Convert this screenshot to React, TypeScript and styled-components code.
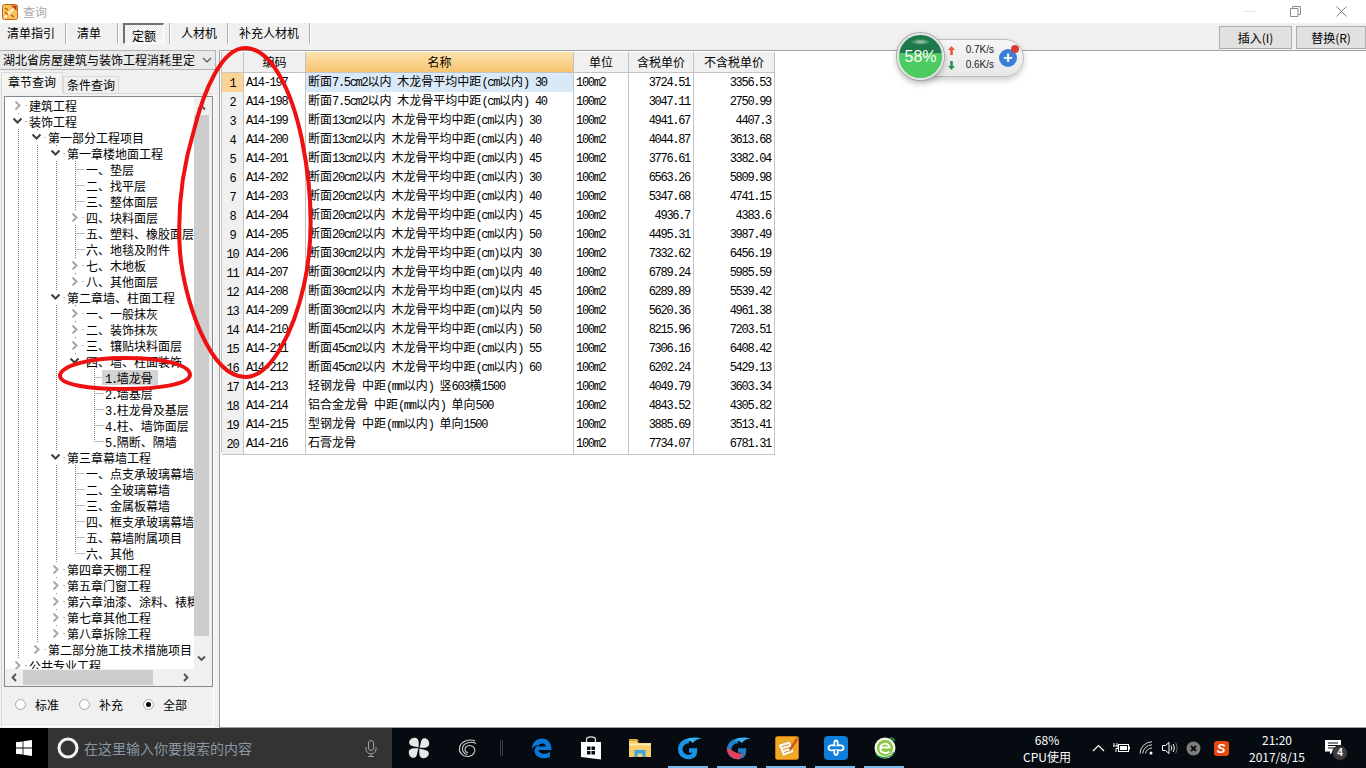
import React from "react";
import styled, { createGlobalStyle } from "styled-components";

const Global = createGlobalStyle`
  html, body { margin: 0; padding: 0; background: #fff; overflow: hidden; }
  * { box-sizing: border-box; }
  body { font-family: "Noto Sans CJK SC", "Liberation Sans", sans-serif; font-size: 12px; color: #000; }
`;

const Root = styled.div`position: relative; width: 1366px; height: 768px; display: flex; flex-direction: column; overflow: hidden;`;

/* ---------- title bar ---------- */
const TitleBar = styled.div`height: 23px; flex: none; background: #fff; display: flex; align-items: center; padding-left: 2px;`;
const TitleText = styled.span`margin-left: 5px; color: #a8a8a8; font-size: 12px; line-height: 16px;`;
const WindowControls = styled.div`margin-left: auto; display: flex; align-items: center; height: 23px; padding-right: 2px;`;
const WindowBtn = styled.div`width: 46px; height: 23px; display: flex; align-items: center; justify-content: center;`;

/* ---------- toolbar ---------- */
const Toolbar = styled.div`height: 27px; flex: none; background: #f0f0f0; display: flex; align-items: flex-start;`;
const ToolItem = styled.div<{ $w: number; $pl: number }>`
  width: ${p => p.$w}px; height: 21px; padding-left: ${p => p.$pl}px; line-height: 20px; white-space: nowrap;
  border-right: 1px solid #b0b0b0; box-shadow: 1px 0 0 #fff;
`;
const ActiveHolder = styled.div`width: 52px; height: 21px; padding-left: 5px; border-right: 1px solid #b0b0b0; box-shadow: 1px 0 0 #fff;`;
const ActiveTool = styled.div`
  width: 41px; height: 21px; text-align: center; line-height: 21px;
  border: 1px solid #fff; border-top: 2px solid #707070; border-left: 2px solid #707070;
  background-color: #fff;
  background-image: repeating-conic-gradient(#e4e4e4 0 25%, #fff 0 50%);
  background-size: 2px 2px;
`;
const ToolRight = styled.div`margin-left: auto; display: flex; gap: 4px; padding-top: 3px;`;
const ActionBtn = styled.button<{ $w: number }>`
  width: ${p => p.$w}px; height: 23px; background: #e1e1e1; border: 1px solid #adadad; padding: 0;
  font-family: "Noto Sans CJK SC", "Liberation Sans", sans-serif; font-size: 12px; color: #000; line-height: 20px;
`;

/* ---------- body ---------- */
const Body = styled.div`height: 678px; flex: none; display: flex; background: #f0f0f0;`;
const LeftPanel = styled.div`width: 219px; flex: none; display: flex; flex-direction: column; background: #f0f0f0;`;
const Combo = styled.div`
  width: 216px; height: 20px; flex: none; background: #e9e9e9; border: 1px solid #b4b4b4; border-left: none;
  display: flex; align-items: center; justify-content: space-between; padding: 0 3px; line-height: 18px; white-space: nowrap;
`;
const Tabs = styled.div`height: 21px; flex: none; margin-top: 2px; padding-left: 1px; display: flex; align-items: flex-end; position: relative; z-index: 1;`;
const Tab = styled.div<{ $active?: boolean }>`
  width: ${p => (p.$active ? 62 : 56)}px; height: ${p => (p.$active ? 22 : 17)}px; text-align: center;
  line-height: ${p => (p.$active ? 17 : 15)}px;
  background: ${p => (p.$active ? "#f3f3f3" : "#f0f0f0")};
  border: 1px solid #d9d9d9; border-bottom: none;
  margin-bottom: ${p => (p.$active ? -1 : 0)}px;
`;
const TabPanel = styled.div`
  width: 213px; margin: 0 0 1px 1px; flex: 1; border: 1px solid #d9d9d9; border-bottom: 1px solid #fff; border-right-color: #fff;
  padding: 2px 0 0 2px; display: flex; flex-direction: column; background: #f0f0f0;
`;
const TreeBox = styled.div`
  width: 209px; height: 591px; flex: none; border: 1px solid #828790; display: grid;
  grid-template-columns: 189px 17px; grid-template-rows: 572px 16px; background: #f0f0f0;
`;
const TreeBody = styled.div`position: relative; background: #fff; overflow: hidden;`;
const TreeLines = styled.svg`position: absolute; left: 0; top: 0;`;
const TreeRow = styled.div<{ $level: number }>`
  position: relative; height: 16px; display: flex; align-items: center; white-space: nowrap;
  padding-left: ${p => 3 + 19 * p.$level}px;
`;
const ChevronSlot = styled.div`width: 21px; flex: none; padding-left: 3px; display: flex; align-items: center;`;
const ChevronBack = styled.div`width: 13px; height: 15px; background: #fff; display: flex; align-items: center; justify-content: center;`;
const TreeLabel = styled.span<{ $selected?: boolean }>`
  margin-left: -3px; padding: 0 ${p => (p.$selected ? 5 : 2)}px 0 3px; height: 15px; line-height: 15px;
  background: ${p => (p.$selected ? "#d3d3d3" : "transparent")};
`;
const VScroll = styled.div`grid-row: 1; grid-column: 2; display: flex; flex-direction: column; align-items: flex-start; background: #f0f0f0;`;
const ArrowCell = styled.div<{ $up?: boolean }>`
  height: 18px; width: 15px; flex: none; display: flex; align-items: center; justify-content: center;
  padding: ${p => (p.$up ? "3px 0 0" : "0 0 3px")};
`;
const VTrack = styled.div`flex: 1; width: 15px;`;
const VThumb = styled.div`width: 15px; height: 521px; background: #cdcdcd;`;
const HScroll = styled.div`grid-column: 1 / span 2; grid-row: 2; display: flex; align-items: center; background: #f0f0f0;`;
const HThumb = styled.div`width: 130px; height: 15px; background: #cdcdcd;`;
const HGap = styled.div`flex: 1;`;
const HEnd = styled.div`width: 17px; flex: none;`;
const HArrow = styled.div`width: 18px; height: 15px; display: flex; align-items: center; justify-content: center;`;
const RadioRow = styled.div`flex: 1; display: flex; align-items: center; padding: 0 0 5px 11px;`;
const RadioItem = styled.div`width: 64px; display: flex; align-items: center; gap: 9px;`;
const RadioDot = styled.div<{ $on?: boolean }>`
  width: 11px; height: 11px; border-radius: 50%; border: 1px solid #a8a8a8; background: #fff; position: relative;
  display: flex; align-items: center; justify-content: center;
  &::after { content: ""; width: 5px; height: 5px; border-radius: 50%; background: ${p => (p.$on ? "#000" : "transparent")}; }
`;

/* ---------- table ---------- */
const MainPanel = styled.div`flex: 1; background: #fff; border-top: 1px solid #a0a0a0; border-left: 1px solid #a0a0a0; border-bottom: 1px solid #a0a0a0; padding: 1px;`;
const Grid = styled.div`width: 554px; border-left: 1px solid #c4c4c4;`;
const GridRow = styled.div<{ $h: number }>`
  display: grid; grid-template-columns: 22px 62px 268px 55px 65px 81px; height: ${p => p.$h}px;
`;
const HeadCell = styled.div<{ $hot?: boolean }>`
  background: ${p => (p.$hot ? "linear-gradient(#fde3ae, #f7c46f)" : "#f0f0f0")};
  border-right: 1px solid #c4c4c4; border-bottom: 1px solid #c4c4c4; text-align: center; line-height: 20px;
`;
const NumCell = styled.div<{ $hot?: boolean }>`
  background: ${p => (p.$hot ? "#fcd395" : "#f0f0f0")};
  border-right: 1px solid #c4c4c4; border-bottom: 1px solid #c4c4c4; text-align: center; line-height: 17px;
`;
const Cell = styled.div<{ $right?: boolean; $hot?: boolean }>`
  background: ${p => (p.$hot ? "#d9e9f8" : "#fff")};
  border-right: 1px solid #c4c4c4; border-bottom: 1px solid #c4c4c4; line-height: 16px; white-space: nowrap;
  padding: 0 ${p => (p.$right ? 3 : 1)}px 0 ${p => (p.$right ? 0 : 2)}px; text-align: ${p => (p.$right ? "right" : "left")};
`;
const Lat = styled.span`font-family: "Liberation Mono", monospace; font-size: 12px; letter-spacing: -1.3px; white-space: pre;`;

/* ---------- taskbar ---------- */
const Taskbar = styled.div`height: 40px; flex: none; background: #050b11; display: flex; align-items: stretch; color: #fff;`;
const StartBtn = styled.div`width: 48px; background: #000; display: flex; align-items: center; justify-content: center;`;
const SearchBox = styled.div`width: 344px; background: #333; display: flex; align-items: center; padding-left: 9px;`;
const SearchText = styled.span`margin-left: 5px; color: #8a97a3; font-size: 14px; width: 281px; white-space: nowrap;`;
const TaskSlot = styled.div<{ $w?: number; $ml?: number; $on?: boolean }>`
  width: ${p => p.$w ?? 49}px; margin-left: ${p => p.$ml ?? 0}px; display: flex; align-items: center; justify-content: center; position: relative;
  ${p => p.$on && `&::after { content: ""; position: absolute; left: 4px; right: 5px; bottom: 0; height: 2px; background: #76b9ed; }`}
`;
const TaskSep = styled.div`width: 3px; height: 16px; border-left: 1px solid #3a4046; border-right: 1px solid #3a4046;`;
const Tray = styled.div`margin-left: auto; display: flex; align-items: stretch;`;
const TrayText = styled.div<{ $w: number }>`
  width: ${p => p.$w}px; display: flex; flex-direction: column; align-items: center; justify-content: center;
  font-family: "Noto Sans CJK SC", "Liberation Sans", sans-serif; font-size: 12px; line-height: 17px; color: #fff; white-space: nowrap;
`;
const Sogou = styled.div`
  width: 15px; height: 15px; border-radius: 3px; background: #e8480f; color: #fff; font: italic bold 13px/15px "Liberation Sans", sans-serif; text-align: center;
`;
const Badge = styled.div`
  position: absolute; left: 14px; top: 17px; width: 16px; height: 16px; border-radius: 50%; background: #3c3c3c; border: 1px solid #111;
  color: #fff; font: bold 10px/14px "Liberation Sans", sans-serif; text-align: center;
`;

/* ---------- overlays ---------- */
const Overlay = styled.svg`position: absolute; left: 0; top: 0; pointer-events: none;`;
const Widget = styled.div`position: absolute; left: 897px; top: 33px; width: 128px; height: 48px;`;
const WidgetPill = styled.div`
  position: absolute; left: 18px; top: 6px; width: 109px; height: 38px; border-radius: 19px;
  background: linear-gradient(#f6f6f6, #e8e8e8); border: 1px solid #bdbdbd; box-shadow: 0 3px 6px rgba(0,0,0,.2);
`;
const WidgetBall = styled.div`
  position: absolute; left: 0; top: 0; width: 47px; height: 47px; border-radius: 50%; border: 2px solid #e4e4e4;
  box-shadow: 0 0 0 1px #a9a9a9, 0 3px 6px rgba(0,0,0,.3);
  background: radial-gradient(ellipse 10px 3px at 50% 16%, rgba(255,255,255,.65), transparent), linear-gradient(#1d7a48 0 42%, #4ccb62 42%);
  color: #fff; font: 16px/43px "Liberation Sans", sans-serif; text-align: center;
`;
const Speed = styled.div<{ $top: number }>`
  position: absolute; left: 51px; top: ${p => p.$top}px; width: 46px; display: flex; justify-content: space-between; align-items: center;
  font: 10px/12px "Liberation Sans", sans-serif; color: #1a1a1a;
`;
const PlusBtn = styled.div`
  position: absolute; left: 102px; top: 16px; width: 18px; height: 18px; border-radius: 50%; background: #3b80d8; color: #fff;
  font: bold 16px/17px "Liberation Sans", sans-serif; text-align: center;
  &::after { content: ""; position: absolute; right: -2px; top: -4px; width: 8px; height: 8px; border-radius: 50%; background: #d93a3a; }
`;

/* ---------- data ---------- */
const Mixed = ({ text }: { text: string }) => (
  <>
    {text.split(/([\x00-\x7f]+)/).filter(Boolean).map((s, i) =>
      /^[\x00-\x7f]/.test(s) ? <Lat key={i}>{s}</Lat> : <span key={i}>{s}</span>
    )}
  </>
);

type Node = [number, string, "o" | "c" | "l", boolean?];
const tree: Node[] = [
  [0, "建筑工程", "c"], [0, "装饰工程", "o"], [1, "第一部分工程项目", "o"], [2, "第一章楼地面工程", "o"],
  [3, "一、垫层", "l"], [3, "二、找平层", "l"], [3, "三、整体面层", "l"], [3, "四、块料面层", "c"],
  [3, "五、塑料、橡胶面层", "l"], [3, "六、地毯及附件", "l"], [3, "七、木地板", "c"], [3, "八、其他面层", "c"],
  [2, "第二章墙、柱面工程", "o"], [3, "一、一般抹灰", "c"], [3, "二、装饰抹灰", "c"], [3, "三、镶贴块料面层", "c"],
  [3, "四、墙、柱面装饰", "o"], [4, "1.墙龙骨", "l", true], [4, "2.墙基层", "l"], [4, "3.柱龙骨及基层", "l"],
  [4, "4.柱、墙饰面层", "l"], [4, "5.隔断、隔墙", "l"], [2, "第三章幕墙工程", "o"], [3, "一、点支承玻璃幕墙", "l"],
  [3, "二、全玻璃幕墙", "l"], [3, "三、金属板幕墙", "l"], [3, "四、框支承玻璃幕墙", "l"], [3, "五、幕墙附属项目", "l"],
  [3, "六、其他", "l"], [2, "第四章天棚工程", "c"], [2, "第五章门窗工程", "c"], [2, "第六章油漆、涂料、裱糊工程", "c"],
  [2, "第七章其他工程", "c"], [2, "第八章拆除工程", "c"], [1, "第二部分施工技术措施项目", "c"], [0, "公共专业工程", "c"],
];
// [level, first row, last row] of each vertical dotted line
const vLines: [number, number, number][] = [
  [0, 1, 35], [1, 2, 34], [2, 3, 33], [3, 4, 11], [3, 13, 16], [3, 23, 28], [4, 17, 21],
];
const lineX = (l: number) => 13.5 + 19 * l;
const rowY = (i: number) => 8 + 16 * i;

const a = "木龙骨平均中距(cm以内) ";
const b = "木龙骨平均中距(cm)以内 ";
const rows: [string, string, string, string][] = [
  ["A14-197", `断面7.5cm2以内 ${a}30`, "3724.51", "3356.53"],
  ["A14-198", `断面7.5cm2以内 ${a}40`, "3047.11", "2750.99"],
  ["A14-199", `断面13cm2以内 ${a}30`, "4941.67", "4407.3"],
  ["A14-200", `断面13cm2以内 ${a}40`, "4044.87", "3613.68"],
  ["A14-201", `断面13cm2以内 ${a}45`, "3776.61", "3382.04"],
  ["A14-202", `断面20cm2以内 ${a}30`, "6563.26", "5809.98"],
  ["A14-203", `断面20cm2以内 ${a}40`, "5347.68", "4741.15"],
  ["A14-204", `断面20cm2以内 ${a}45`, "4936.7", "4383.6"],
  ["A14-205", `断面20cm2以内 ${a}50`, "4495.31", "3987.49"],
  ["A14-206", `断面30cm2以内 ${b}30`, "7332.62", "6456.19"],
  ["A14-207", `断面30cm2以内 ${b}40`, "6789.24", "5985.59"],
  ["A14-208", `断面30cm2以内 ${b}45`, "6289.89", "5539.42"],
  ["A14-209", `断面30cm2以内 ${b}50`, "5620.36", "4961.38"],
  ["A14-210", `断面45cm2以内 ${a}50`, "8215.96", "7203.51"],
  ["A14-211", `断面45cm2以内 ${a}55`, "7306.16", "6408.42"],
  ["A14-212", `断面45cm2以内 ${a}60`, "6202.24", "5429.13"],
  ["A14-213", "轻钢龙骨 中距(mm以内) 竖603横1500", "4049.79", "3603.34"],
  ["A14-214", "铝合金龙骨 中距(mm以内) 单向500", "4843.52", "4305.82"],
  ["A14-215", "型钢龙骨 中距(mm以内) 单向1500", "3885.69", "3513.41"],
  ["A14-216", "石膏龙骨", "7734.07", "6781.31"],
];

/* ---------- icons ---------- */
const Chevron = ({ open }: { open: boolean }) =>
  open ? (
    <svg width="11" height="8" viewBox="0 0 11 8"><path d="M1.500 1.500 5.500 5.500 9.500 1.500" fill="none" stroke="#404040" strokeWidth="2" /></svg>
  ) : (
    <svg width="8" height="11" viewBox="0 0 8 11"><path d="M1.500 1.500 5.500 5.500 1.500 9.500" fill="none" stroke="#a8a8a8" strokeWidth="2" /></svg>
  );
const Arrow = ({ d }: { d: string }) => (
  <svg width="9" height="9" viewBox="0 0 9 9"><path d={d} fill="none" stroke="#505050" strokeWidth="1.800" /></svg>
);
const AppLogo = () => (
  <svg width="16" height="16" viewBox="0 0 16 16">
    <rect x=".5" y=".5" width="15" height="15" rx="2" fill="#f8c25a" stroke="#c8641a" />
    <path d="M2.500 13.500 13.500 3" stroke="#fff3d0" strokeWidth="2" />
    <path d="M3 4l3 2M9 11l3 2M3 8l3 3" stroke="#b84a18" strokeWidth="1.100" />
    <path d="M9 1.500h5.500V7z" fill="#c8401a" />
  </svg>
);
const WinLogo = () => (
  <svg width="16" height="16" viewBox="0 0 16 16" fill="#fff">
    <path d="M0 2.300 6.600 1.400v6.200H0zM7.400 1.300 16 0v7.600H7.400zM0 8.400h6.600v6.200L0 13.700zM7.400 8.400H16V16l-8.600-1.300z" />
  </svg>
);
const Mic = () => (
  <svg width="12" height="17" viewBox="0 0 12 17" fill="none" stroke="#a0a0a0">
    <rect x="3.500" y=".5" width="5" height="10" rx="2.500" /><path d="M1 7v2a5 5 0 0 0 10 0V7M6 14v2M3 16.500h6" />
  </svg>
);
const Pinwheel = () => (
  <svg width="22" height="22" viewBox="0 0 22 22" fill="#e8e8e8">
    <path d="M10.500 10.500C7 9 3 9.500 1.500 7 .2 4 3 .8 6.500.8c3 0 5 2.200 4 9.700z" />
    <path d="M11.500 10.500C13 7 12.500 3 15 1.500c3-1.300 6.200 1.500 6.200 5 0 3-2.200 5-9.700 4z" />
    <path d="M11.500 11.500C15 13 19 12.500 20.500 15c1.300 3-1.500 6.200-5 6.200-3 0-5-2.200-4-9.700z" />
    <path d="M10.500 11.500C9 15 9.500 19 7 20.500c-3 1.300-6.200-1.500-6.200-5 0-3 2.200-5 9.700-4z" />
  </svg>
);
const Swirl = () => (
  <svg width="20" height="20" viewBox="0 0 20 20" fill="none" stroke="#cfcfcf" strokeWidth="1.100">
    <path d="M17 3C11 .5 2.500 3 1.500 10c-.7 5 4 9 9 8.500 4.500-.5 7.500-4.500 6-8-1.300-3-6-4-8.500-1.500-2 2-1 5.500 2 5.500" />
    <path d="M18 5.500C13 3 5.500 4.500 4.500 10c-.5 3 1.500 6 5 6.500" />
  </svg>
);
const Edge = () => (
  <svg width="21" height="21" viewBox="0 0 21 21">
    <path d="M1 11C1 4.500 6 .5 11 .5c6 0 9.500 4.500 9.500 11.500H7.500c.5 4 6.500 5 11.500 2v5c-6 2.500-15 1.500-15.500-6C3.500 10 6 7.500 8.500 6.500 5.500 6.800 2.500 8.500 1 11zm6.500-2.500h7.200c0-4-6.700-4-7.200 0z" fill="#0a78d4" fillRule="evenodd" />
  </svg>
);
const Store = () => (
  <svg width="22" height="24" viewBox="0 0 22 24">
    <path d="M6.500 6V3.500C6.500 1.500 8.500.8 11 .8s4.500.7 4.500 2.700V6" fill="none" stroke="#e4e4e4" strokeWidth="1.200" />
    <path d="M1 6h20v17.500L1 21z" fill="#fff" />
    <path d="M7 10.500h3.500v3.400H7zM11.500 10.500H15v3.400h-3.500zM7 15h3.500v3.400H7zM11.500 15H15v3.400h-3.500z" fill="#050b11" />
  </svg>
);
const Folder = () => (
  <svg width="22" height="18" viewBox="0 0 22 18">
    <path d="M0 2h8l2 2h12v14H0z" fill="#f3cd66" /><path d="M0 0h8l2 2H0z" fill="#dba93a" />
    <path d="M0 4.500h22v2H0z" fill="#ffe9a4" /><path d="M5.500 11h11v7h-3v-3.500h-5V18h-3z" fill="#35a6e8" />
  </svg>
);
const GIcon = ({ red }: { red?: boolean }) => (
  <svg width="26" height="24" viewBox="0 0 26 24" fill="none">
    <path d="M13 5C7.500 5 4 9 4.300 13.500 4.600 18.500 9 21.500 13.500 21c3.500-.4 5.500-3 5.500-6.500h-6" stroke={red ? "#1c7fc8" : "#1a92e6"} strokeWidth="4.500" />
    <path d="M9 4C13 .8 20.500 1 25.500 2.500c-3.500.5-6.500 1.500-8.500 4.500C15 5 12 4 9 4z" fill="#35b4f0" />
    {red && <path d="M2.500 13c3 1.500 9 6 14.500 5.500l-3 4c-5 .5-10-2.500-11.500-9.500z" fill="#e2455a" stroke="#e2455a" strokeWidth="1.500" />}
  </svg>
);
const Notes = () => (
  <svg width="24" height="24" viewBox="0 0 24 24">
    <rect x=".5" y=".5" width="23" height="23" rx="2" fill="#f1a922" stroke="#c96f14" />
    <path d="M3 8.500 15 5l4 11-11 4.500z" fill="#fff6dd" stroke="#b98a3e" strokeWidth=".6" />
    <path d="M7 10.500l7-2M8 13.500l7-2M9 16.500l7-2" stroke="#a87b3c" strokeWidth=".8" />
    <path d="M21.500 1.500 14 13l2 1.500L23 4z" fill="#d1531c" />
  </svg>
);
const PlusApp = () => (
  <svg width="24" height="24" viewBox="0 0 24 24">
    <rect width="24" height="24" rx="4" fill="#0f7fd9" />
    <path d="M12 4.500c2 0 2 3 1.500 5 2-.5 6-.5 6 2.500s-4 2.500-6 2c.5 2 .5 5-1.500 5s-2-3-1.500-5c-2 .5-6 1-6-2s4-3 6-2.500c-.5-2-.5-5 1.500-5z" fill="none" stroke="#fff" strokeWidth="1.800" />
  </svg>
);
const GreenE = () => (
  <svg width="24" height="24" viewBox="0 0 24 24">
    <circle cx="12" cy="12" r="10.500" fill="#f1f5ea" />
    <circle cx="12" cy="12" r="8" fill="#8ac63f" />
    <path d="M7.500 11.500h9c0-5-9-5-9.200 1 0 5 6.500 5.500 9 3" fill="none" stroke="#fff" strokeWidth="2" />
    <path d="M3 18c4 5 14 5 18-2M17 2c2 0 4 1 5 3" fill="none" stroke="#1f9a3c" strokeWidth="1.300" />
  </svg>
);
const Caret = () => (
  <svg width="13" height="8" viewBox="0 0 13 8"><path d="M1 7 6.500 1.500 12 7" fill="none" stroke="#fff" strokeWidth="1.200" /></svg>
);
const Battery = () => (
  <svg width="17" height="12" viewBox="0 0 17 12" fill="none" stroke="#fff">
    <path d="M1 1v3M4 1v3M0 4h5v2.500H3V10" /><rect x="5.500" y="2.500" width="10" height="7" /><rect x="7" y="4" width="7" height="4" fill="#fff" stroke="none" /><path d="M16.500 4.500v3" />
  </svg>
);
const Wifi = () => (
  <svg width="15" height="14" viewBox="0 0 15 14" fill="none" stroke="#d8d8d8">
    <path d="M1 12.500A12 12 0 0 1 13 .8M3.700 12.500A9.500 9.500 0 0 1 13 3.800M6.500 12.500A6.500 6.500 0 0 1 13 7" /><circle cx="12" cy="12" r="1.500" fill="#fff" stroke="none" />
  </svg>
);
const Volume = () => (
  <svg width="16" height="14" viewBox="0 0 16 14" fill="none" stroke="#fff">
    <path d="M.5 4.500h3L7 1.500v11l-3.500-3h-3z" /><path d="M9 4.500c1 1.500 1 3.500 0 5M11 3c1.700 2.500 1.700 5.500 0 8" /><path d="M13.500 1.500c2 3 2 8 0 11" stroke="#707070" />
  </svg>
);
const CloseCircle = () => (
  <svg width="15" height="15" viewBox="0 0 15 15">
    <circle cx="7.500" cy="7.500" r="7" fill="#7d7d7d" /><path d="M5 5l5 5M10 5l-5 5" stroke="#0a0a0a" strokeWidth="1.800" />
  </svg>
);
const Chat = () => (
  <svg width="17" height="16" viewBox="0 0 17 16">
    <path d="M0 0h16v11.500H8l-3 3v-3H0z" fill="#fff" /><path d="M3 3h10M3 5.500h10M3 8h7" stroke="#050b11" />
  </svg>
);
const SpeedArrow = ({ up }: { up?: boolean }) => (
  <svg width="7" height="9" viewBox="0 0 7 9">
    <path d={up ? "M3.500 0 7 4H4.800v5H2.200V4H0z" : "M3.500 9 7 5H4.800V0H2.200v5H0z"} fill={up ? "#e8583c" : "#24945a"} />
  </svg>
);

export default function App() {
  return (
    <Root>
      <Global />
      <TitleBar>
        <AppLogo />
        <TitleText>查询</TitleText>
        <WindowControls>
          <WindowBtn>
            <svg width="11" height="1"><rect width="11" height="1" fill="#e4e4e4" /></svg>
          </WindowBtn>
          <WindowBtn>
            <svg width="11" height="11" fill="none" stroke="#8c8c8c"><path d="M.5 2.500h7.500v8H.5zM2.500 2.500v-2h8v8H8" /></svg>
          </WindowBtn>
          <WindowBtn>
            <svg width="11" height="11" stroke="#808080"><path d="M.5.5l10 10M10.500.5l-10 10" /></svg>
          </WindowBtn>
        </WindowControls>
      </TitleBar>

      <Toolbar>
        <ToolItem $w={66} $pl={7}>清单指引</ToolItem>
        <ToolItem $w={52} $pl={11}>清单</ToolItem>
        <ActiveHolder><ActiveTool>定额</ActiveTool></ActiveHolder>
        <ToolItem $w={58} $pl={11}>人材机</ToolItem>
        <ToolItem $w={82} $pl={11}>补充人材机</ToolItem>
        <ToolRight>
          <ActionBtn $w={73}>插入(I)</ActionBtn>
          <ActionBtn $w={70}>替换(R)</ActionBtn>
        </ToolRight>
      </Toolbar>

      <Body>
        <LeftPanel>
          <Combo>
            <span>湖北省房屋建筑与装饰工程消耗里定</span>
            <svg width="10" height="7" viewBox="0 0 10 7"><path d="M1 1l4 4 4-4" fill="none" stroke="#555" strokeWidth="1.200" /></svg>
          </Combo>
          <Tabs>
            <Tab $active>章节查询</Tab>
            <Tab>条件查询</Tab>
          </Tabs>
          <TabPanel>
            <TreeBox>
              <TreeBody>
                <TreeLines width="189" height="572">
                  <g stroke="#7a7a7a" strokeDasharray="1 1" fill="none">
                    {vLines.map(([l, f, t], i) => (
                      <line key={i} x1={lineX(l)} x2={lineX(l)} y1={rowY(f) - 8} y2={rowY(t)} />
                    ))}
                    {tree.map(([l, , k], i) => (
                      <line key={i} x1={k === "l" ? lineX(l) : lineX(l) + 7} x2={lineX(l) + 9} y1={rowY(i) + 0.5} y2={rowY(i) + 0.5} />
                    ))}
                  </g>
                </TreeLines>
                {tree.map(([l, text, k, sel], i) => (
                  <TreeRow key={i} $level={l}>
                    <ChevronSlot>{k !== "l" && <ChevronBack><Chevron open={k === "o"} /></ChevronBack>}</ChevronSlot>
                    <TreeLabel $selected={sel}><Mixed text={text} /></TreeLabel>
                  </TreeRow>
                ))}
              </TreeBody>
              <VScroll>
                <ArrowCell $up><Arrow d="M1 6.500 4.500 3 8 6.500" /></ArrowCell>
                <VTrack><VThumb /></VTrack>
                <ArrowCell><Arrow d="M1 2.500 4.500 6 8 2.500" /></ArrowCell>
              </VScroll>
              <HScroll>
                <HArrow><Arrow d="M6 1 2.500 4.500 6 8" /></HArrow>
                <HThumb />
                <HGap />
                <HArrow><Arrow d="M3 1 6.500 4.500 3 8" /></HArrow>
                <HEnd />
              </HScroll>
            </TreeBox>
            <RadioRow>
              <RadioItem><RadioDot /><span>标准</span></RadioItem>
              <RadioItem><RadioDot /><span>补充</span></RadioItem>
              <RadioItem><RadioDot $on /><span>全部</span></RadioItem>
            </RadioRow>
          </TabPanel>
        </LeftPanel>

        <MainPanel>
          <Grid>
            <GridRow $h={21}>
              <HeadCell />
              <HeadCell>编码</HeadCell>
              <HeadCell $hot>名称</HeadCell>
              <HeadCell>单位</HeadCell>
              <HeadCell>含税单价</HeadCell>
              <HeadCell>不含税单价</HeadCell>
            </GridRow>
            {rows.map((r, i) => (
              <GridRow key={r[0]} $h={19}>
                <NumCell $hot={i === 0}><Lat>{i + 1}</Lat></NumCell>
                <Cell><Lat>{r[0]}</Lat></Cell>
                <Cell $hot={i === 0}><Mixed text={r[1]} /></Cell>
                <Cell><Lat>100m2</Lat></Cell>
                <Cell $right><Lat>{r[2]}</Lat></Cell>
                <Cell $right><Lat>{r[3]}</Lat></Cell>
              </GridRow>
            ))}
          </Grid>
        </MainPanel>
      </Body>

      <Taskbar>
        <StartBtn><WinLogo /></StartBtn>
        <SearchBox>
          <svg width="22" height="22" viewBox="0 0 22 22"><circle cx="11" cy="11" r="9" fill="none" stroke="#f2f2f2" strokeWidth="3" /></svg>
          <SearchText>在这里输入你要搜索的内容</SearchText>
          <Mic />
        </SearchBox>
        <TaskSlot $ml={2}><Pinwheel /></TaskSlot>
        <TaskSlot><Swirl /></TaskSlot>
        <TaskSlot $w={18}><TaskSep /></TaskSlot>
        <TaskSlot $ml={7}><Edge /></TaskSlot>
        <TaskSlot><Store /></TaskSlot>
        <TaskSlot><Folder /></TaskSlot>
        <TaskSlot $on><GIcon /></TaskSlot>
        <TaskSlot $on><GIcon red /></TaskSlot>
        <TaskSlot $on><Notes /></TaskSlot>
        <TaskSlot $on><PlusApp /></TaskSlot>
        <TaskSlot $on><GreenE /></TaskSlot>
        <Tray>
          <TrayText $w={82}><span>68%</span><span>CPU使用</span></TrayText>
          <TaskSlot $w={20}><Caret /></TaskSlot>
          <TaskSlot $w={27}><Battery /></TaskSlot>
          <TaskSlot $w={23}><Wifi /></TaskSlot>
          <TaskSlot $w={23}><Volume /></TaskSlot>
          <TaskSlot $w={25}><CloseCircle /></TaskSlot>
          <TaskSlot $w={30}><Sogou>S</Sogou></TaskSlot>
          <TrayText $w={82}><span>21:20</span><span>2017/8/15</span></TrayText>
          <TaskSlot $w={30}><Chat /><Badge>4</Badge></TaskSlot>
          <TaskSlot $w={18} />
        </Tray>
      </Taskbar>

      <Widget>
        <WidgetPill />
        <WidgetBall>58%</WidgetBall>
        <Speed $top={11}><SpeedArrow up /><span>0.7K/s</span></Speed>
        <Speed $top={26}><SpeedArrow /><span>0.6K/s</span></Speed>
        <PlusBtn>+</PlusBtn>
      </Widget>

      <Overlay width="1366" height="768" fill="none" stroke="#ee1111" strokeWidth="4">
        <path d="M245 48C222 48 204 90 194 130 182 170 177 210 180 252 184 300 210 378 246 377 272 376 294 330 304 285 314 240 312 190 302 140 292 92 272 48 245 48Z" />
        <path d="M60 375C62 366 88 358 124 358 160 358 190 364 190 375 189 384 160 389 124 389 90 389 59 385 60 375Z" />
      </Overlay>
    </Root>
  );
}
